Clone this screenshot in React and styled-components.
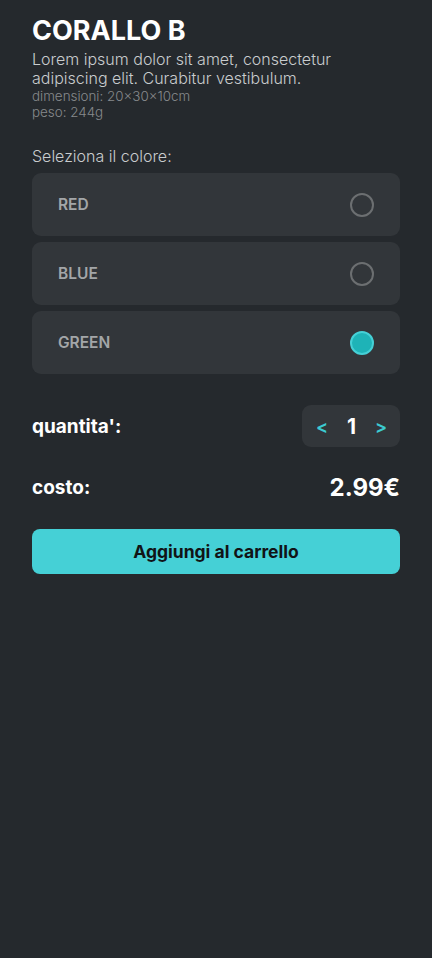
import React, { useState } from "react";
import styled, { createGlobalStyle } from "styled-components";

const COLORS = ["RED", "BLUE", "GREEN"];

const GlobalStyle = createGlobalStyle`
  html, body {
    margin: 0;
    padding: 0;
    background: #25292d;
  }
  body {
    font-family: "Inter", "Noto Sans", sans-serif;
    min-height: 958px;
  }
`;

const App = () => {
  const [selected, setSelected] = useState("GREEN");
  const [qty, setQty] = useState(1);

  return (
    <Page>
      <GlobalStyle />
      <Header>
        <Title>CORALLO B</Title>
        <Description>
          Lorem ipsum dolor sit amet, consectetur adipiscing elit. Curabitur
          vestibulum.
        </Description>
        <Meta>dimensioni: 20×30×10cm</Meta>
        <Meta>peso: 244g</Meta>
      </Header>

      <Label>Seleziona il colore:</Label>
      <Options>
        {COLORS.map((c) => (
          <Option key={c} onClick={() => setSelected(c)}>
            <OptionName>{c}</OptionName>
            <Radio $checked={selected === c} />
          </Option>
        ))}
      </Options>

      <Row>
        <RowLabel>quantita':</RowLabel>
        <Stepper>
          <Arrow onClick={() => setQty(Math.max(1, qty - 1))}>&lt;</Arrow>
          <Qty>{qty}</Qty>
          <Arrow onClick={() => setQty(qty + 1)}>&gt;</Arrow>
        </Stepper>
      </Row>

      <Row $tall>
        <RowLabel>costo:</RowLabel>
        <Price>{(2.99 * qty).toFixed(2)}€</Price>
      </Row>

      <CartButton>Aggiungi al carrello</CartButton>
    </Page>
  );
};

export default App;

const Page = styled.div`
  box-sizing: border-box;
  width: 432px;
  min-height: 958px;
  padding: 16px 32px;
  background: #25292d;
  color: #fff;
`;

const Header = styled.div`
  margin-bottom: 26px;
`;

const Title = styled.h1`
  margin: 0;
  font-size: 27px;
  line-height: 30px;
  font-weight: 700;
  color: #fff;
`;

const Description = styled.p`
  margin: 4px 0 0;
  font-size: 16px;
  line-height: 19px;
  font-weight: 300;
  color: #c9ccce;
`;

const Meta = styled.div`
  font-size: 13.4px;
  line-height: 16px;
  font-weight: 300;
  color: #878a8c;
`;

const Label = styled.div`
  font-size: 16px;
  line-height: 20px;
  font-weight: 300;
  color: #c9ccce;
  margin-bottom: 7px;
`;

const Options = styled.div`
  display: flex;
  flex-direction: column;
  gap: 6px;
`;

const Option = styled.div`
  height: 63px;
  box-sizing: border-box;
  padding: 0 26px;
  display: flex;
  align-items: center;
  justify-content: space-between;
  background: #32363a;
  border-radius: 9px;
  cursor: pointer;
`;

const OptionName = styled.span`
  font-size: 15.5px;
  font-weight: 600;
  color: #a3a6a8;
`;

const Radio = styled.span`
  box-sizing: border-box;
  width: 24px;
  height: 24px;
  border-radius: 50%;
  border: 2px solid ${({ $checked }) => ($checked ? "#45d0d6" : "#6c6f71")};
  background: ${({ $checked }) => ($checked ? "#1eb3b7" : "transparent")};
`;

const Row = styled.div`
  display: flex;
  align-items: center;
  justify-content: space-between;
  margin-top: ${({ $tall }) => ($tall ? "26px" : "31px")};
`;

const RowLabel = styled.span`
  font-size: 19px;
  font-weight: 700;
  color: #fff;
`;

const Stepper = styled.div`
  width: 98px;
  height: 42px;
  box-sizing: border-box;
  display: flex;
  align-items: center;
  justify-content: space-between;
  padding: 0 11px 0 12px;
  background: #32363a;
  border-radius: 9px;
`;

const Arrow = styled.button`
  border: none;
  background: none;
  padding: 0;
  width: 16px;
  font-family: inherit;
  font-size: 18px;
  font-weight: 600;
  color: #3ccbd1;
  cursor: pointer;
`;

const Qty = styled.span`
  font-size: 21px;
  font-weight: 700;
  color: #fff;
`;

const Price = styled.span`
  font-size: 24px;
  line-height: 29px;
  font-weight: 700;
  color: #fff;
`;

const CartButton = styled.button`
  display: block;
  width: 100%;
  height: 45px;
  margin-top: 27px;
  border: none;
  border-radius: 8px;
  background: #45d0d6;
  font-family: inherit;
  font-size: 17.5px;
  font-weight: 700;
  color: #111417;
  cursor: pointer;
`;
